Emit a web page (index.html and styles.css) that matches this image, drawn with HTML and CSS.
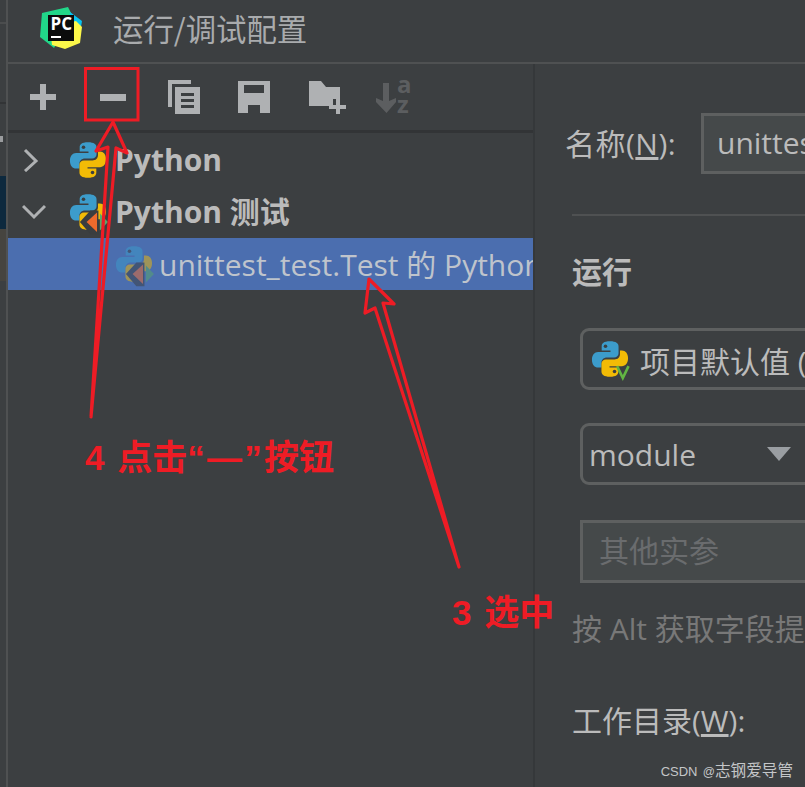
FILE: index.html
```html
<!DOCTYPE html>
<html lang="zh-CN">
<head>
<meta charset="utf-8">
<title>运行/调试配置</title>
<link rel="stylesheet" href="styles.css">
</head>
<body>
<svg class="defs" width="0" height="0" aria-hidden="true">
  <defs>
    <g id="py">
      <path fill="#3c9ccb" d="M8 .5C5.3.5 4.5 1.4 4.5 2.7V4.4H8.2V5H3C1.5 5 .4 6.2.4 8.3S1.5 11.6 3 11.6H4.4V9.6C4.4 8.3 5.4 7.4 6.7 7.4H9.7C10.8 7.4 11.6 6.6 11.6 5.6V2.7C11.6 1.4 10.6.5 8 .5Z"/>
      <path fill="#f2bb06" d="M8 15.5C10.7 15.5 11.5 14.6 11.5 13.3V11.6H7.8V11H13C14.5 11 15.6 9.8 15.6 7.7S14.5 4.4 13 4.4H12.2V6C12.2 7.3 11.2 8.2 9.9 8.2H6.3C5.2 8.2 4.4 9 4.4 10V13.3C4.4 14.6 5.4 15.5 8 15.5Z"/>
      <circle cx="6.1" cy="2.6" r=".75" fill="#3b3f41"/>
      <circle cx="9.9" cy="13.3" r=".75" fill="#3b3f41"/>
    </g>
    <g id="tri">
      <path fill="#3a3d3f" d="M9 7.4 4.6 12.2 9 17.4H12.4V7.4Z"/>
      <path fill="#ed6a2c" d="M11.8 8.2V16.4L7.4 12.2Z"/>
      <path fill="#59a869" d="M13 8.6V15.8L16.4 12.2Z"/>
    </g>
  </defs>
</svg>
<div class="app">
  <div class="edge">
    <div class="edge-a"></div>
    <div class="edge-b"></div>
    <div class="edge-c"><span class="edge-tick"></span></div>
    <div class="edge-navy"></div>
    <div class="edge-brown"></div>
    <div class="edge-rest"></div>
  </div>
  <div class="window">
    <header class="titlebar">
      <svg class="logo" viewBox="0 0 42 42" width="42" height="42">
        <path fill="#21d789" d="M2 6 28 0 33 10 14 41 0 30Z"/>
        <path fill="#07c3f2" d="M30 5 42 14 40 26 28 22Z"/>
        <path fill="#fcf84a" d="M36 14 42 20 40 36 25 42 12 38 10 20Z"/>
        <rect x="8" y="8" width="26" height="26" fill="#0b0c0c"/>
        <text x="10.5" y="22.5" class="logo-text">PC</text>
        <rect x="11" y="29" width="10" height="2" fill="#fff"/>
      </svg>
      <h1 class="title">运行/调试配置</h1>
    </header>
    <div class="panes">
      <section class="left">
        <div class="toolbar">
          <span class="tool"><svg viewBox="0 0 26 26" width="26" height="26"><path fill="#afb1b3" d="M10 0h6v10h10v6H16v10h-6V16H0v-6h10z"/></svg></span>
          <span class="tool"><svg viewBox="0 0 26 26" width="26" height="26"><rect y="10" width="26" height="7" fill="#afb1b3"/></svg></span>
          <span class="tool tool-nudge"><svg viewBox="0 0 32 34" width="32" height="34"><path fill="#afb1b3" d="M0 0H23V4H4V27H0Z"/><path fill="#afb1b3" fill-rule="evenodd" d="M7 7H32V34H7ZM13 13V16H26V13ZM13 19V22H26V19ZM13 25V28H26V25Z"/></svg></span>
          <span class="tool tool-nudge"><svg viewBox="0 0 32 32" width="32" height="32"><path fill="#afb1b3" fill-rule="evenodd" d="M0 0H32V32H0ZM6 4V12H26V4ZM10 24V32H22V24Z"/></svg></span>
          <span class="tool tool-folder"><svg viewBox="0 0 37 33" width="37" height="33"><path fill="#afb1b3" d="M0 0H12L17 6H31V18H24V25H0Z"/><path fill="#afb1b3" d="M27 17h4v7h6v4h-6v5h-4v-5h-7v-4h7z"/></svg></span>
          <span class="tool tool-nudge"><svg viewBox="0 0 36 36" width="36" height="36"><path fill="#5c5e60" d="M7 4h6v18l7-3v4L10.500 34 0 23v-4l7 3z"/><text x="21" y="14" class="sort-text">a</text><text x="21" y="34" class="sort-text">z</text></svg></span>
        </div>
        <div class="tree">
          <div class="row">
            <svg class="twisty" viewBox="0 0 24 24" width="24" height="24"><path d="M3 2 14 13 3 23" fill="none" stroke="#afb1b3" stroke-width="3"/></svg>
            <svg class="ficon" viewBox="0 0 16 16" width="38" height="38"><use href="#py"/></svg>
            <span class="label strong">Python</span>
          </div>
          <div class="row">
            <svg class="twisty" viewBox="0 0 24 24" width="24" height="24"><path d="M1 6 12 17 23 6" fill="none" stroke="#afb1b3" stroke-width="3"/></svg>
            <svg class="ficon" viewBox="0 0 16 16" width="38" height="38"><use href="#py"/><use href="#tri"/></svg>
            <span class="label strong">Python 测试</span>
          </div>
          <div class="row selected">
            <svg class="ficon faded" viewBox="0 0 16 16" width="38" height="38"><use href="#py"/><use href="#tri"/></svg>
            <span class="label leaf">unittest_test.Test 的 Python 测试</span>
          </div>
        </div>
      </section>
      <section class="right">
        <div class="name-row">
          <span class="field-label name-label">名称(<u>N</u>):</span>
          <div class="input name-input">unittest_test.Test 的 Python 测试</div>
        </div>
        <hr class="rule">
        <h2 class="group">运行</h2>
        <div class="combo first">
          <svg class="combo-icon" viewBox="0 0 16 16" width="38" height="38"><use href="#py"/><path d="M11 11 13.400 16 15.800 11" fill="none" stroke="#62b543" stroke-width="1.100"/></svg>
          <span class="combo-label">项目默认值 (Python 3.9)</span>
        </div>
        <div class="combo">
          <span class="combo-text">module</span>
          <span class="arrow"></span>
        </div>
        <div class="input args">其他实参</div>
        <p class="hint">按 Alt 获取字段提示</p>
        <div class="field-label workdir">工作目录(<u>W</u>):</div>
      </section>
    </div>
  </div>
</div>
<svg class="marks" viewBox="0 0 805 787" width="805" height="787" aria-hidden="true">
  <rect x="85.500" y="68.500" width="52.500" height="51.500" fill="none" stroke="#ee1c25" stroke-width="3"/>
  <path d="M91 417 108 147 96 151 113 122 127 153 116 148Z" fill="none" stroke="#ee1c25" stroke-width="3.200" stroke-linejoin="round"/>
  <path d="M459 567 375 308 365 313 369 279 394 304 383 303Z" fill="none" stroke="#ee1c25" stroke-width="3.200" stroke-linejoin="round"/>
</svg>
<div class="note note-4">4 点击<span class="note-dash">“—”</span>按钮</div>
<div class="note note-3">3 选中</div>
<div class="watermark"><span class="wm-brand">CSDN</span> <span class="wm-at">@</span>志钢爱导管</div>
</body>
</html>
```
FILE: styles.css
```css
html, body {
  margin: 0;
  padding: 0;
  height: 787px;
  overflow: hidden;
  background: #3c3f41;
}
body {
  position: relative;
  width: 805px;
  font-family: "Open Sans", "Noto Sans CJK SC", sans-serif;
  color: #bbbbbb;
}
.defs { position: absolute; }
.app { display: flex; height: 787px; }

.edge {
  width: 6px;
  flex: none;
  display: flex;
  flex-direction: column;
  border-right: 2px solid #4f5152;
}
.edge-a { height: 24px; border-bottom: 2px solid #4b4d4e; box-sizing: border-box; }
.edge-b { height: 80px; border-bottom: 2px solid #323436; box-sizing: border-box; }
.edge-c { height: 72px; position: relative; }
.edge-tick { position: absolute; left: 0; top: 32px; width: 3px; height: 6px; background: #9a9c9e; }
.edge-navy { height: 53px; background: #0d293e; }
.edge-brown { height: 52px; background: #46443f; }
.edge-rest { flex: 1; }

.window { flex: 1; min-width: 0; display: flex; flex-direction: column; }
.titlebar {
  height: 62px;
  display: flex;
  align-items: center;
  border-bottom: 2px solid #4f5152;
}
.logo { margin: -7px 0 0 32px; flex: none; }
.logo-text { font: 700 17px "Open Sans", sans-serif; fill: #fff; }
.title {
  margin: -7px 0 0 31px;
  font-size: 30.400px;
  font-weight: 400;
  color: #a9abad;
  font-family: "Noto Sans CJK SC", sans-serif;
}

.panes { flex: 1; display: flex; min-height: 0; }
.left {
  width: 525px;
  flex: none;
  border-right: 2px solid #35383a;
  overflow: hidden;
}
.toolbar {
  height: 66px;
  display: flex;
  align-items: center;
  border-bottom: 3px solid #323436;
}
.tool { width: 70px; flex: none; display: flex; justify-content: center; align-items: center; }
.tool-nudge svg { margin-left: 2px; }
.tool-folder svg { margin-left: 8px; }
.sort-text { font: 700 24px "Open Sans", sans-serif; fill: #5c5e60; }

.tree { display: flex; flex-direction: column; padding-top: 1px; }
.row {
  height: 52px;
  display: flex;
  align-items: center;
  padding-left: 14px;
  white-space: nowrap;
}
.twisty { flex: none; margin-right: 23px; }
.ficon { flex: none; margin-right: 8px; overflow: visible; }
.label { font-size: 30px; line-height: 40px; }
.strong { font-weight: 700; }
.selected { background: #4b6eaf; padding-left: 107px; }
.faded { opacity: .5; margin-right: 6px; }
.leaf { color: #bfc4cc; margin-top: 2px; }

.right { flex: 1; min-width: 0; padding: 49px 0 0 37px; overflow: hidden; }
.name-row { display: flex; align-items: center; margin-left: -7px; }
.field-label { font-size: 30px; line-height: 40px; white-space: nowrap; color: #bbbbbb; }
.name-label { margin-top: 1px; width: 114px; letter-spacing: .5px; flex: none; }
.input {
  box-sizing: border-box;
  background: #45494a;
  border: 3px solid #5e6060;
  font-size: 30px;
  white-space: nowrap;
}
.name-input {
  margin-left: 22px;
  width: 400px;
  flex: none;
  height: 61px;
  line-height: 53px;
  padding-left: 13px;
}
.rule { margin: 40px 0 0; border: 0; height: 2px; background: #4f5152; width: 400px; }
.group { margin: 36px 0 0; font-size: 30px; line-height: 40px; font-weight: 700; color: #bbbbbb; }
.combo {
  box-sizing: border-box;
  width: 400px;
  height: 62px;
  margin: 33px 0 0 8px;
  border: 3px solid #5e6060;
  border-radius: 9px;
  display: flex;
  align-items: center;
  font-size: 30px;
  white-space: nowrap;
}
.first { margin-top: 36px; padding-left: 8px; }
.combo-icon { flex: none; margin-right: 11px; overflow: visible; }
.combo-label { margin-top: 2px; }
.combo-text { padding-left: 6px; width: 178px; flex: none; }
.arrow {
  width: 0;
  height: 0;
  border-left: 12px solid transparent;
  border-right: 12px solid transparent;
  border-top: 14px solid #9a9ea2;
}
.args {
  width: 400px;
  height: 63px;
  margin: 35px 0 0 8px;
  line-height: 55px;
  padding-left: 16px;
  color: #6a6c6e;
}
.hint { margin: 26px 0 0; font-size: 30px; line-height: 40px; color: #787878; white-space: nowrap; }
.workdir { margin-top: 52px; }

.marks { position: absolute; left: 0; top: 0; }
.note {
  position: absolute;
  color: #ee1c25;
  font-family: "Liberation Sans", "Noto Sans CJK SC", sans-serif;
  font-weight: 700;
  font-size: 35px;
  line-height: 44px;
  word-spacing: 3px;
  white-space: nowrap;
}
.note-dash { letter-spacing: 2.300px; }
.note-4 { left: 85px; top: 436px; }
.note-3 { left: 452px; top: 591px; }
.watermark {
  position: absolute;
  right: 12px;
  bottom: 5px;
  font-size: 15.600px;
  line-height: 20px;
  color: #c4c6c8;
  font-family: "Liberation Sans", "Noto Sans CJK SC", sans-serif;
}
.wm-brand { font-size: 13px; }
.wm-at { font-size: 12px; margin-left: 1px; }
```
